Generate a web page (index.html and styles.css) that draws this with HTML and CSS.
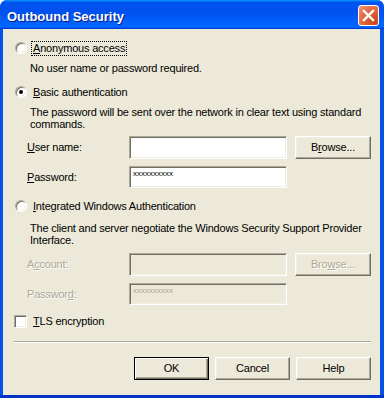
FILE: index.html
```html
<!DOCTYPE html>
<html lang="en">
<head>
    <meta charset="UTF-8">
    <title>Outbound Security</title>
    <link rel="stylesheet" href="styles.css">
</head>
<body>
<div class="window">
    <div class="titlebar">
        <span class="title">Outbound Security</span>
        <span class="close">
            <svg width="21" height="21" viewBox="0 0 21 21">
                <path d="M6 6 L15 15 M15 6 L6 15" stroke="#fff" stroke-width="2.4" stroke-linecap="square"/>
            </svg>
        </span>
    </div>

    <div class="client">
        <div class="option opt-anon">
            <span class="radio"></span>
            <span class="label focus"><u>A</u>nonymous access</span>
        </div>
        <p class="note note-anon">No user name or password required.</p>

        <div class="option opt-basic">
            <span class="radio checked"></span>
            <span class="label"><u>B</u>asic authentication</span>
        </div>
        <p class="note note-basic">The password will be sent over the network in clear text using standard commands.</p>

        <div class="field field-user">
            <span class="field-label"><u>U</u>ser name:</span>
            <span class="edit"></span>
            <span class="button browse">B<u>r</u>owse...</span>
        </div>
        <div class="field field-pass">
            <span class="field-label"><u>P</u>assword:</span>
            <span class="edit short"><span class="secret">xxxxxxxxxx</span></span>
        </div>

        <div class="option opt-win">
            <span class="radio"></span>
            <span class="label"><u>I</u>ntegrated Windows Authentication</span>
        </div>
        <p class="note note-win">The client and server negotiate the Windows Security Support Provider Interface.</p>

        <div class="field field-account disabled">
            <span class="field-label">A<u>c</u>count:</span>
            <span class="edit"></span>
            <span class="button browse">Bro<u>w</u>se...</span>
        </div>
        <div class="field field-pass2 disabled">
            <span class="field-label">Passwor<u>d</u>:</span>
            <span class="edit short"><span class="secret">xxxxxxxxxx</span></span>
        </div>

        <div class="option opt-tls">
            <span class="check"></span>
            <span class="label"><u>T</u>LS encryption</span>
        </div>

        <div class="separator"></div>

        <div class="actions">
            <span class="button default">OK</span>
            <span class="button">Cancel</span>
            <span class="button">Help</span>
        </div>
    </div>
</div>
</body>
</html>
```

FILE: styles.css
```css
* {
    margin: 0;
    padding: 0;
    box-sizing: border-box;
}

body {
    background: #fff;
    font-family: "Liberation Sans", Arial, sans-serif;
    font-size: 11px;
    letter-spacing: -0.2px;
    color: #000;
}

u {
    text-decoration: underline;
    text-underline-offset: 1px;
}

/* Window frame */
.window {
    width: 384px;
    height: 398px;
    display: flex;
    flex-direction: column;
    background: #0553e6;
    border-radius: 7px 7px 0 0;
    border-bottom: 3px solid #0034c8;
    overflow: hidden;
}

.titlebar {
    height: 29px;
    flex: none;
    display: flex;
    align-items: flex-start;
    padding: 5px 5px 0 7px;
    background: linear-gradient(180deg, #0997ff, #0053ee 8%, #0050ee 40%, #0066ff 88%, #0066ff 93%, #005bff 95%, #003dd7 96%, #003dd7);
}

.title {
    margin-top: 4px;
    font-weight: bold;
    font-size: 13px;
    line-height: 16px;
    letter-spacing: 0;
    color: #fff;
    text-shadow: 1px 1px #0a1883;
}

.close {
    margin-left: auto;
    width: 21px;
    height: 21px;
    border: 1px solid #fff;
    border-radius: 3px;
    background: radial-gradient(circle at 85% 85%, #cc4616, #e36a42 60%, #f09a80 100%);
    display: flex;
    align-items: center;
    justify-content: center;
}

.close svg {
    display: block;
    margin: -1px;
}

/* Dialog body */
.client {
    flex: 1;
    margin: 0 4px 0 3px;
    background: #ece9d8;
    padding: 12px 9px 15px 11px;
    display: flex;
    flex-direction: column;
}

.option {
    display: flex;
    align-items: flex-start;
    height: 15px;
}

.opt-basic { margin-top: 11px; }
.opt-win { margin-top: 11px; }
.opt-tls { margin-top: 9px; }

.radio {
    width: 12px;
    height: 12px;
    margin: 1px 0 0 1px;
    border-radius: 50%;
    background: #fff;
    border: 1px solid;
    border-color: #aca899 #fff #fff #aca899;
    box-shadow: inset 1px 1px #716f64, inset -1px -1px #f1efe2;
    display: flex;
    align-items: center;
    justify-content: center;
}

.radio.checked::after {
    content: "";
    width: 4px;
    height: 4px;
    border-radius: 50%;
    background: #000;
}

.check {
    width: 13px;
    height: 13px;
    margin-top: 1px;
    background: #fff;
    border: 1px solid;
    border-color: #aca899 #fff #fff #aca899;
    box-shadow: inset 1px 1px #716f64, inset -1px -1px #f1efe2;
}

.label {
    margin-left: 4px;
    padding: 0 1px;
    border: 1px dotted transparent;
    line-height: 13px;
    white-space: nowrap;
}

.label.focus {
    border-color: #000;
}

.check + .label {
    margin-left: 4px;
}

.note {
    padding-left: 16px;
    line-height: 12px;
    margin-top: 6px;
}

.note-win { margin-top: 8px; }

/* Label / edit / button rows */
.field {
    display: flex;
    align-items: center;
    height: 23px;
    margin-top: 7px;
}

.field-user { margin-top: 6px; }
.field-pass,
.field-pass2 { height: 22px; }

.field-label {
    width: 115px;
    padding-left: 13px;
    line-height: 13px;
}

.edit {
    width: 158px;
    height: 100%;
    background: #fff;
    border: 1px solid;
    border-color: #aca899 #fff #fff #aca899;
    box-shadow: inset 1px 1px #716f64, inset -1px -1px #f1efe2;
    padding: 3px 0 0 3px;
}

.secret {
    display: block;
    font-size: 8px;
    line-height: 7px;
    letter-spacing: 0;
    color: #000;
}

.button {
    width: 75px;
    height: 23px;
    display: flex;
    align-items: center;
    justify-content: center;
    background: #ece9d8;
    border: 1px solid;
    border-color: #fff #716f64 #716f64 #fff;
    box-shadow: inset -1px -1px #aca899, inset 1px 1px #f1efe2;
    line-height: 13px;
}

.browse {
    width: 76px;
    margin-left: 8px;
}

.button.default {
    border: 1px solid #000;
    box-shadow: inset 1px 1px #fff, inset -1px -1px #716f64, inset -2px -2px #aca899;
}

.disabled .field-label,
.disabled .button,
.disabled .secret {
    color: #aca899;
}

.disabled .field-label,
.disabled .button {
    text-shadow: 1px 1px #fff;
}

.disabled .edit {
    background: #ece9d8;
}

.separator {
    margin-top: 12px;
    height: 2px;
    border-top: 1px solid #aca899;
    border-bottom: 1px solid #fff;
}

.actions {
    margin-top: 14px;
    display: flex;
    justify-content: flex-end;
    gap: 6px;
}
```
